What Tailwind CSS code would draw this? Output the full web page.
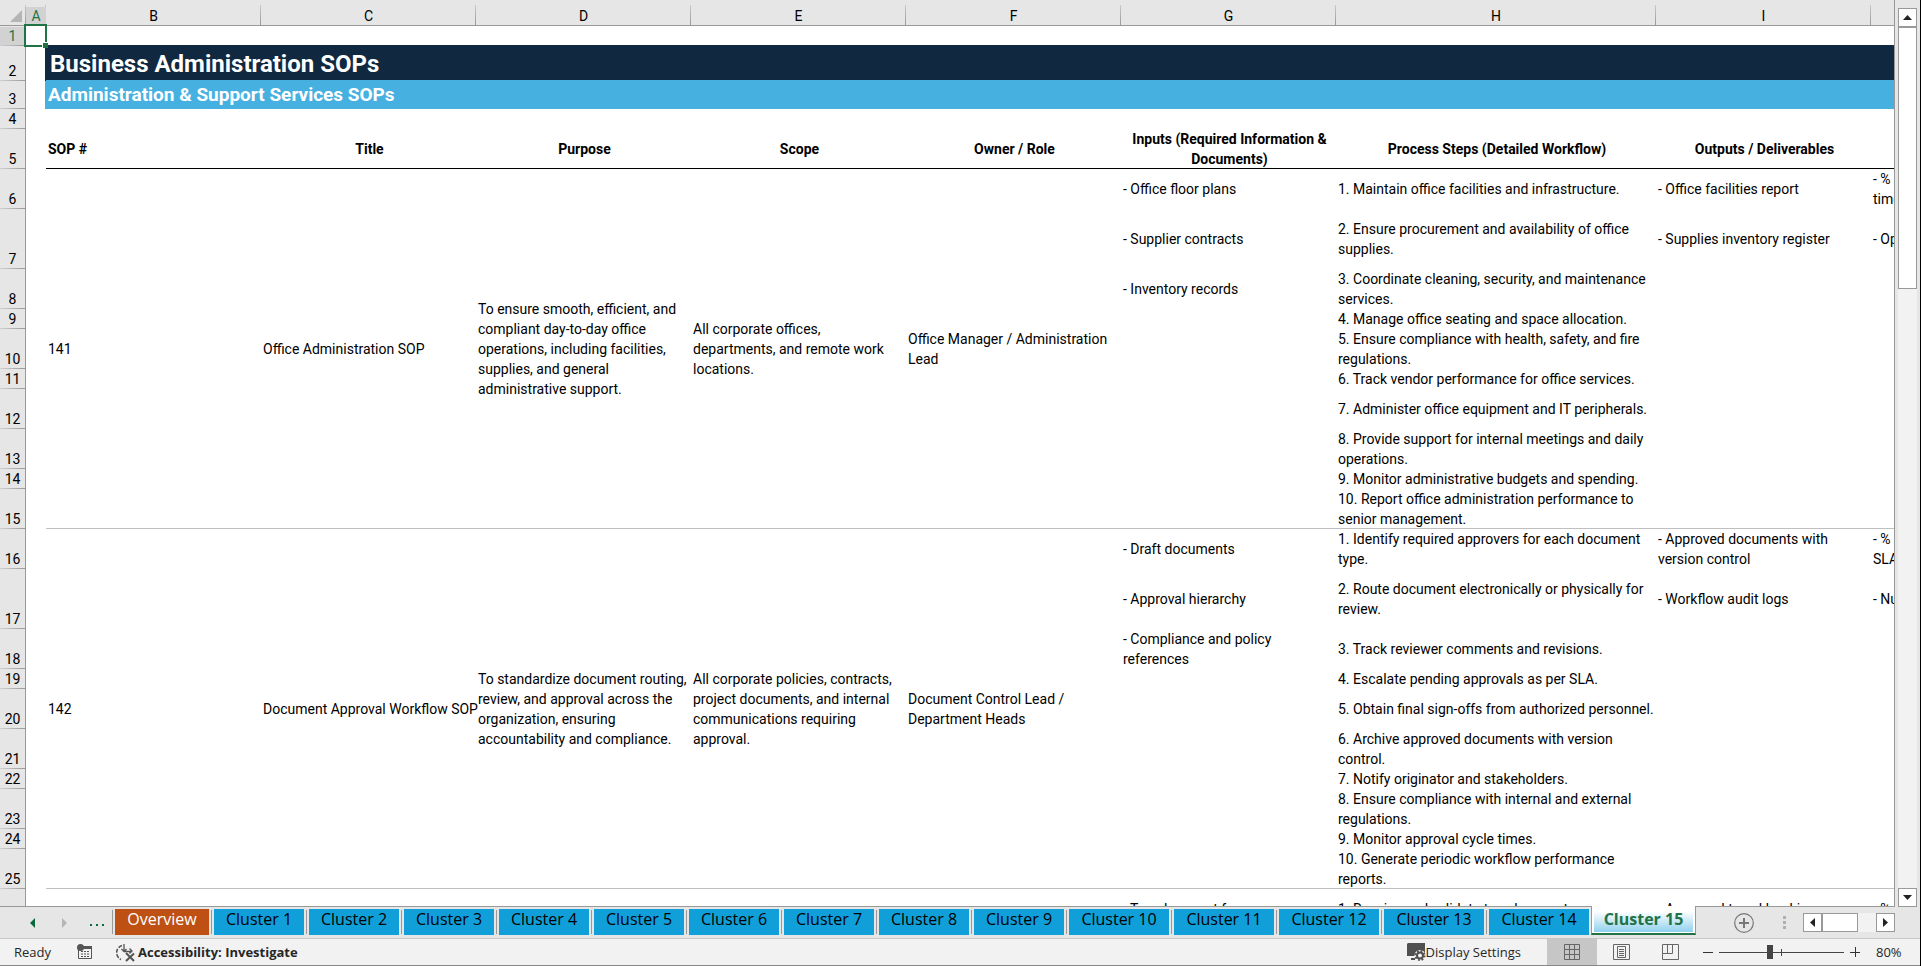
<!DOCTYPE html>
<html lang="en">
<head>
<meta charset="utf-8">
<title>Business Administration SOPs</title>
<script src="https://cdn.jsdelivr.net/npm/@tailwindcss/browser@4"></script>
</head>
<body class="flex h-screen flex-col overflow-hidden border-r border-black bg-[#e6e6e6] font-['Open_Sans','Noto_Sans',sans-serif] text-[#262626]">

<main class="flex min-h-0 flex-1">
  <div class="min-w-0 flex-1 overflow-hidden border-r border-b border-[#999] bg-white">
    <table class="w-[2086px] table-fixed border-separate border-spacing-0 bg-white font-['Roboto',sans-serif] text-sm leading-5 text-black
      [&_td]:p-0 [&_td]:pl-0.5 [&_td]:align-middle
      [&_tbody_th[scope=row]]:border-r [&_tbody_th[scope=row]]:border-[#999] [&_tbody_th[scope=row]]:bg-[#e6e6e6] [&_tbody_th[scope=row]]:bg-[linear-gradient(to_right,#d0d0d0,#999)] [&_tbody_th[scope=row]]:bg-[length:100%_1px] [&_tbody_th[scope=row]]:bg-bottom [&_tbody_th[scope=row]]:bg-no-repeat [&_tbody_th[scope=row]]:p-0 [&_tbody_th[scope=row]]:pb-px [&_tbody_th[scope=row]]:align-bottom [&_tbody_th[scope=row]]:text-sm [&_tbody_th[scope=row]]:leading-[18px] [&_tbody_th[scope=row]]:font-normal
      [&_thead_th]:border-b [&_thead_th]:border-[#999] [&_thead_th]:bg-[#e6e6e6] [&_thead_th]:bg-[linear-gradient(to_bottom,#c8c8c8,#999)] [&_thead_th]:bg-[length:1px_20px] [&_thead_th]:bg-right-bottom [&_thead_th]:bg-no-repeat [&_thead_th]:p-0 [&_thead_th]:pt-1.5 [&_thead_th]:text-sm [&_thead_th]:leading-[18px] [&_thead_th]:font-normal">
      <colgroup>
        <col class="w-[26px]"><col class="w-5"><col class="w-[215px]"><col class="w-[215px]"><col class="w-[215px]"><col class="w-[215px]"><col class="w-[215px]"><col class="w-[215px]"><col class="w-[320px]"><col class="w-[215px]"><col class="w-[215px]">
      </colgroup>
      <thead>
        <tr class="h-[26px]">
          <th aria-label="Select all"><svg class="ml-2.5 size-3" viewBox="0 0 12 12"><path d="M12 0V12H0Z" fill="#b5b5b5"/></svg></th>
          <th scope="col"><div class="bg-[#d2d2d2] text-[#217346]">A</div></th>
          <th scope="col">B</th><th scope="col">C</th><th scope="col">D</th><th scope="col">E</th><th scope="col">F</th><th scope="col">G</th><th scope="col">H</th><th scope="col">I</th><th scope="col">J</th>
        </tr>
      </thead>
      <tbody>
        <tr class="h-5"><th scope="row"><div class="bg-[#d2d2d2] text-[#217346]">1</div></th>
          <td class="relative"><div class="absolute -top-0.5 -right-px -bottom-px -left-0.5 border-2 border-[#217346]"><span class="absolute -right-[3px] -bottom-[3px] size-1.5 border-t border-l border-white bg-[#217346]"></span></div></td>
          <td colspan="9" class="border-b border-[#102840]"></td></tr>
        <tr class="h-[35px]"><th scope="row">2</th><td class="border-r border-[#102840]"></td><td colspan="9" class="border-b border-[#46b1e1] bg-[#102840]"><h1 class="pt-0.5 pl-0.5 text-2xl leading-8 font-bold text-white">Business Administration SOPs</h1></td></tr>
        <tr class="h-7"><th scope="row">3</th><td class="border-r border-[#46b1e1]"></td><td colspan="9" class="bg-[#46b1e1]"><h2 class="text-[19px] leading-6 font-bold text-white">Administration &amp; Support Services SOPs</h2></td></tr>
        <tr class="h-5"><th scope="row">4</th><td colspan="10"></td></tr>
        <tr class="h-10 text-center font-bold [&>td+td]:border-b [&>td]:border-black"><th scope="row">5</th><td></td><td class="text-left">SOP #</td><td>Title</td><td>Purpose</td><td>Scope</td><td>Owner / Role</td><td><div class="-mb-px">Inputs (Required Information &amp; Documents)</div></td><td>Process Steps (Detailed Workflow)</td><td>Outputs / Deliverables</td><td></td></tr>

        <tr class="h-10"><th scope="row">6</th><td rowspan="10"></td>
          <td rowspan="10" class="border-b border-[#bfbfbf]">141</td>
          <td rowspan="10" class="border-b border-[#bfbfbf]">Office Administration SOP</td>
          <td rowspan="10" class="border-b border-[#bfbfbf]">To ensure smooth, efficient, and compliant day-to-day office operations, including facilities, supplies, and general administrative support.</td>
          <td rowspan="10" class="border-b border-[#bfbfbf]">All corporate offices, departments, and remote work locations.</td>
          <td rowspan="10" class="border-b border-[#bfbfbf]">Office Manager / Administration Lead</td>
          <td>- Office floor plans</td><td>1. Maintain office facilities and infrastructure.</td><td>- Office facilities report</td><td>- % of requests closed on<br>time</td></tr>
        <tr class="h-[60px]"><th scope="row">7</th><td>- Supplier contracts</td><td>2. Ensure procurement and availability of office supplies.</td><td>- Supplies inventory register</td><td>- Operating cost</td></tr>
        <tr class="h-10"><th scope="row">8</th><td>- Inventory records</td><td>3. Coordinate cleaning, security, and maintenance services.</td><td></td><td></td></tr>
        <tr class="h-5"><th scope="row">9</th><td></td><td>4. Manage office seating and space allocation.</td><td></td><td></td></tr>
        <tr class="h-10"><th scope="row">10</th><td></td><td>5. Ensure compliance with health, safety, and fire regulations.</td><td></td><td></td></tr>
        <tr class="h-5"><th scope="row">11</th><td></td><td>6. Track vendor performance for office services.</td><td></td><td></td></tr>
        <tr class="h-10"><th scope="row">12</th><td></td><td>7. Administer office equipment and IT peripherals.</td><td></td><td></td></tr>
        <tr class="h-10"><th scope="row">13</th><td></td><td>8. Provide support for internal meetings and daily operations.</td><td></td><td></td></tr>
        <tr class="h-5"><th scope="row">14</th><td></td><td>9. Monitor administrative budgets and spending.</td><td></td><td></td></tr>
        <tr class="h-10 [&>td]:border-b [&>td]:border-[#bfbfbf]"><th scope="row">15</th><td></td><td><div class="-mb-px">10. Report office administration performance to senior management.</div></td><td></td><td></td></tr>

        <tr class="h-10"><th scope="row">16</th><td rowspan="10"></td>
          <td rowspan="10" class="border-b border-[#bfbfbf]">142</td>
          <td rowspan="10" class="border-b border-[#bfbfbf] whitespace-nowrap">Document Approval Workflow SOP</td>
          <td rowspan="10" class="border-b border-[#bfbfbf]">To standardize document routing, review, and approval across the organization, ensuring accountability and compliance.</td>
          <td rowspan="10" class="border-b border-[#bfbfbf]">All corporate policies, contracts, project documents, and internal communications requiring approval.</td>
          <td rowspan="10" class="border-b border-[#bfbfbf]">Document Control Lead / Department Heads</td>
          <td>- Draft documents</td><td>1. Identify required approvers for each document type.</td><td>- Approved documents with version control</td><td>- % approved within<br>SLA</td></tr>
        <tr class="h-[60px]"><th scope="row">17</th><td>- Approval hierarchy</td><td>2. Route document electronically or physically for review.</td><td>- Workflow audit logs</td><td>- Number of revisions</td></tr>
        <tr class="h-10"><th scope="row">18</th><td>- Compliance and policy references</td><td>3. Track reviewer comments and revisions.</td><td></td><td></td></tr>
        <tr class="h-5"><th scope="row">19</th><td></td><td>4. Escalate pending approvals as per SLA.</td><td></td><td></td></tr>
        <tr class="h-10"><th scope="row">20</th><td></td><td>5. Obtain final sign-offs from authorized personnel.</td><td></td><td></td></tr>
        <tr class="h-10"><th scope="row">21</th><td></td><td>6. Archive approved documents with version control.</td><td></td><td></td></tr>
        <tr class="h-5"><th scope="row">22</th><td></td><td>7. Notify originator and stakeholders.</td><td></td><td></td></tr>
        <tr class="h-10"><th scope="row">23</th><td></td><td>8. Ensure compliance with internal and external regulations.</td><td></td><td></td></tr>
        <tr class="h-5"><th scope="row">24</th><td></td><td>9. Monitor approval cycle times.</td><td></td><td></td></tr>
        <tr class="h-10 [&>td]:border-b [&>td]:border-[#bfbfbf]"><th scope="row">25</th><td></td><td><div class="-mb-px">10. Generate periodic workflow performance reports.</div></td><td></td><td></td></tr>
        <tr class="h-10"><th scope="row">26</th><td></td><td></td><td></td><td></td><td></td><td></td><td>- Travel request form</td><td>1. Receive and validate travel requests.</td><td>- Approved travel bookings</td><td>- % booked</td></tr>
      </tbody>
    </table>
  </div>
  <div class="flex w-[25px] flex-col pt-2 pr-[3px] pl-[3px]">
    <button aria-label="Scroll up" class="grid h-[19px] place-items-center border border-[#999] bg-white"><svg class="h-[5px] w-[9px]" viewBox="0 0 9 5"><path d="M0 5 4.5 0 9 5Z" fill="#222"/></svg></button>
    <div class="flex-1 bg-[#f2f2f2]"><div class="h-[262px] border border-[#999] bg-white"></div></div>
    <button aria-label="Scroll down" class="grid h-[19px] place-items-center border border-[#999] bg-white"><svg class="h-[5px] w-[9px]" viewBox="0 0 9 5"><path d="M0 0 4.5 5 9 0Z" fill="#222"/></svg></button>
  </div>
</main>

<nav aria-label="Sheets" class="flex h-8 border-b border-[#c6c6c6] text-base leading-5">
  <div class="flex w-[112px] items-center pl-[30px]">
    <button aria-label="Previous sheet"><svg class="h-2.5 w-[5px]" viewBox="0 0 5 10"><path d="M5 0V10L0 5Z" fill="#0b6a3a"/></svg></button>
    <button aria-label="Next sheet" class="ml-[27px]"><svg class="h-2.5 w-[5px]" viewBox="0 0 5 10"><path d="M0 0V10L5 5Z" fill="#b5b5b5"/></svg></button>
    <button aria-label="More sheets" class="ml-[22px]"><svg class="h-2.5 w-4" viewBox="0 0 16 10"><path d="M1 6h2v2h-2zM7 6h2v2h-2zM13 6h2v2h-2z" fill="#0b6a3a"/></svg></button>
  </div>
  <div class="flex text-black [&>button]:mt-0.5 [&>button]:mr-0.5 [&>button]:ml-0.5 [&>button]:h-[26px] [&>button]:pb-1.5 [&>i]:mt-[3px] [&>i]:h-6 [&>i]:w-px [&>i]:bg-[#999]">
    <i></i><button class="w-[94px] bg-[#bf5013] text-white">Overview</button>
    <i></i><button class="w-[90px] bg-[#119fda]">Cluster 1</button>
    <i></i><button class="w-[90px] bg-[#119fda]">Cluster 2</button>
    <i></i><button class="w-[90px] bg-[#119fda]">Cluster 3</button>
    <i></i><button class="w-[90px] bg-[#119fda]">Cluster 4</button>
    <i></i><button class="w-[90px] bg-[#119fda]">Cluster 5</button>
    <i></i><button class="w-[90px] bg-[#119fda]">Cluster 6</button>
    <i></i><button class="w-[90px] bg-[#119fda]">Cluster 7</button>
    <i></i><button class="w-[90px] bg-[#119fda]">Cluster 8</button>
    <i></i><button class="w-[90px] bg-[#119fda]">Cluster 9</button>
    <i></i><button class="w-[100px] bg-[#119fda]">Cluster 10</button>
    <i></i><button class="w-[100px] bg-[#119fda]">Cluster 11</button>
    <i></i><button class="w-[100px] bg-[#119fda]">Cluster 12</button>
    <i></i><button class="w-[100px] bg-[#119fda]">Cluster 13</button>
    <i></i><button class="w-[100px] bg-[#119fda]">Cluster 14</button>
  </div>
  <div class="-mt-px flex h-[29px] w-[105px] border-r border-b-2 border-l border-[#999] border-b-[#217346] bg-white px-0.5 pb-px"><button aria-current="page" class="h-full flex-1 bg-linear-to-b from-white from-20% to-[#8fd0ee] font-bold text-[#217346]">Cluster 15</button></div>
  <div class="ml-auto flex items-center pr-[25px]">
    <button aria-label="New sheet" class="mr-[29px]"><svg class="size-5" viewBox="0 0 20 20" fill="none" stroke="#777"><circle cx="10" cy="10" r="9.3" stroke-width="1.2"/><path d="M10 5V15M5 10H15" stroke-width="2"/></svg></button>
    <svg class="mr-[17px] h-[13px] w-[3px]" viewBox="0 0 3 13"><path d="M0 0h3v3H0zM0 5h3v3H0zM0 10h3v3H0z" fill="#b0b0b0"/></svg>
    <button aria-label="Scroll left" class="grid size-[19px] place-items-center border border-[#999] bg-white"><svg class="h-[9px] w-[5px]" viewBox="0 0 5 9"><path d="M5 0V9L0 4.5Z" fill="#222"/></svg></button>
    <div class="flex h-[19px] w-[54px] bg-[#f2f2f2]"><div class="w-9 border border-[#999] bg-white"></div></div>
    <button aria-label="Scroll right" class="grid size-[19px] place-items-center border border-[#999] bg-white"><svg class="h-[9px] w-[5px]" viewBox="0 0 5 9"><path d="M0 0V9L5 4.5Z" fill="#222"/></svg></button>
  </div>
</nav>

<footer class="flex h-[27px] items-center border-b border-[#888] bg-[#f2f2f2] pl-3.5 text-[13px] leading-5">
  <span class="w-[63px] pb-px">Ready</span>
  <button aria-label="Record macro"><svg class="h-4 w-[15px]" viewBox="0 0 15 16"><path d="M1.5 6V14.500H14.500V2.500H6" fill="none" stroke="#555"/><path d="M6 2h9v3H6z" fill="#555"/><circle cx="3.500" cy="3.500" r="3.500" fill="#555"/><path d="M4 7.500h2m1 0h2m1 0h2M4 10h2m1 0h2m1 0h2M4 12.500h2m1 0h2m1 0h2" stroke="#555"/></svg></button>
  <button class="ml-6 flex items-center gap-0.5 pb-px font-bold"><svg class="mt-0.5 h-[18px] w-5" viewBox="0 0 20 18" fill="none" stroke="#555"><path d="M6 1.500A7.500 7.500 0 0 0 5 15.500" stroke-width="1.600" stroke-dasharray="4 1.500"/><path d="M8 0V7M5.500 5 8 7.500 10.500 5M8 7.500H16M13.500 4.500 16 7 13.500 9.500" stroke-width="1.300"/><path d="M10 9 18 17M18 9.500 10 17" stroke-width="2"/></svg>Accessibility: Investigate</button>
  <div class="ml-auto flex h-full items-center">
    <button class="flex items-center pb-px"><svg class="h-[18px] w-[19px]" viewBox="0 0 19 18"><path d="M1 0H18V13H0V1Z" fill="#505050"/><path d="M4 15h4v2H4z" fill="#505050"/><circle cx="13" cy="12.500" r="5.500" fill="#f2f2f2"/><circle cx="13" cy="12.500" r="3" fill="none" stroke="#505050" stroke-width="2"/><circle cx="13" cy="12.500" r="4.600" fill="none" stroke="#505050" stroke-width="1.800" stroke-dasharray="1.800 1.813"/></svg>Display Settings</button>
    <button aria-label="Normal view" class="ml-[26px] grid h-full w-[50px] place-items-center bg-[#c6c6c6]"><svg class="size-4" viewBox="0 0 16 16" fill="none" stroke="#666"><path d="M.5.5h15v15H.5zM5.500.5v15M10.500.5v15M.5 5.500h15M.5 10.500h15"/></svg></button>
    <button aria-label="Page layout view" class="grid h-full w-[49px] place-items-center"><svg class="h-4 w-[17px]" viewBox="0 0 17 16" fill="none" stroke="#666"><path d="M.5.500h16v15H.5zM4.500 2.500h8v11h-8zM6 5.500h5M6 7.500h5M6 9.500h5M6 11.500h5"/></svg></button>
    <button aria-label="Page break preview" class="grid h-full w-[49px] place-items-center"><svg class="h-4 w-[17px]" viewBox="0 0 17 16" fill="none" stroke="#666"><path d="M.5.500h16v15H.5zM.5 9.500h10V.5M5.500.500v9"/></svg></button>
    <button aria-label="Zoom out" class="ml-2"><svg class="size-2.5" viewBox="0 0 10 10"><path d="M0 5.500H10" stroke="#333"/></svg></button>
    <input type="range" aria-label="Zoom" min="0" max="100" value="40" class="ml-1.5 h-3.5 w-[125px] appearance-none bg-[linear-gradient(#444,#444),linear-gradient(#444,#444)] bg-[length:100%_1px,1px_7px] bg-center bg-no-repeat [&::-webkit-slider-thumb]:h-3.5 [&::-webkit-slider-thumb]:w-1.5 [&::-webkit-slider-thumb]:appearance-none [&::-webkit-slider-thumb]:bg-[#444]">
    <button aria-label="Zoom in" class="ml-1.5"><svg class="size-2.5" viewBox="0 0 10 10"><path d="M0 5.500H10M5.500 0V10" stroke="#333"/></svg></button>
    <button class="w-[60px] pb-px pl-4 text-left text-[13px]">80%</button>
  </div>
</footer>
</body>
</html>
